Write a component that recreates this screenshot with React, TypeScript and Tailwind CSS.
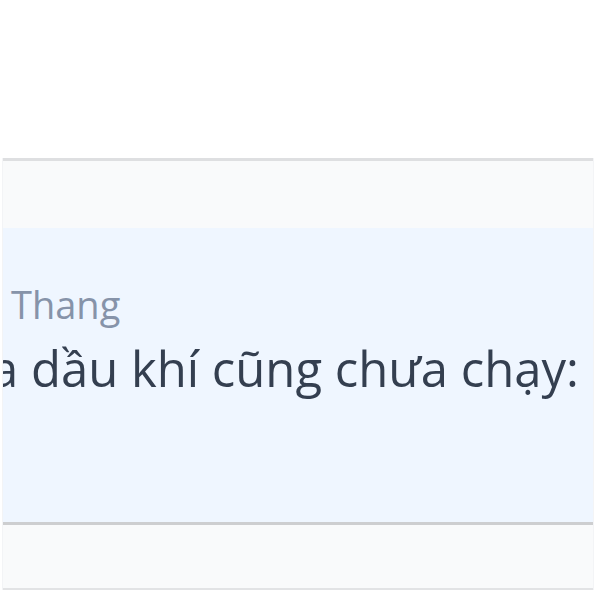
export default function App() {
  return (
    <div className="w-[600px] h-[600px] overflow-hidden bg-white font-['Open_Sans',sans-serif]">
      <div className="h-[158px]" />
      <div className="mr-[6px] ml-[2px] border-x border-[#f3f4f6]">
        <div className="h-[70px] border-t-[3px] border-[#dedfe1] bg-[#f9fafb]" />
        <div className="h-[294px] bg-[#eff6ff] pt-[52px] overflow-hidden">
          <p className="pl-[8px] text-[38px] leading-[48px] text-[#8693a9]">Thang</p>
          <p className="-ml-[12px] mt-[8px] whitespace-nowrap text-[49px] leading-[64px] text-[#343f50]">
            a dầu khí cũng chưa chạy:
          </p>
        </div>
        <div className="h-[66px] border-t-[3px] border-[#cdced0] bg-[#f9fafb]" />
        <div className="h-[2px] bg-[#e2e3e5]" />
      </div>
    </div>
  )
}
